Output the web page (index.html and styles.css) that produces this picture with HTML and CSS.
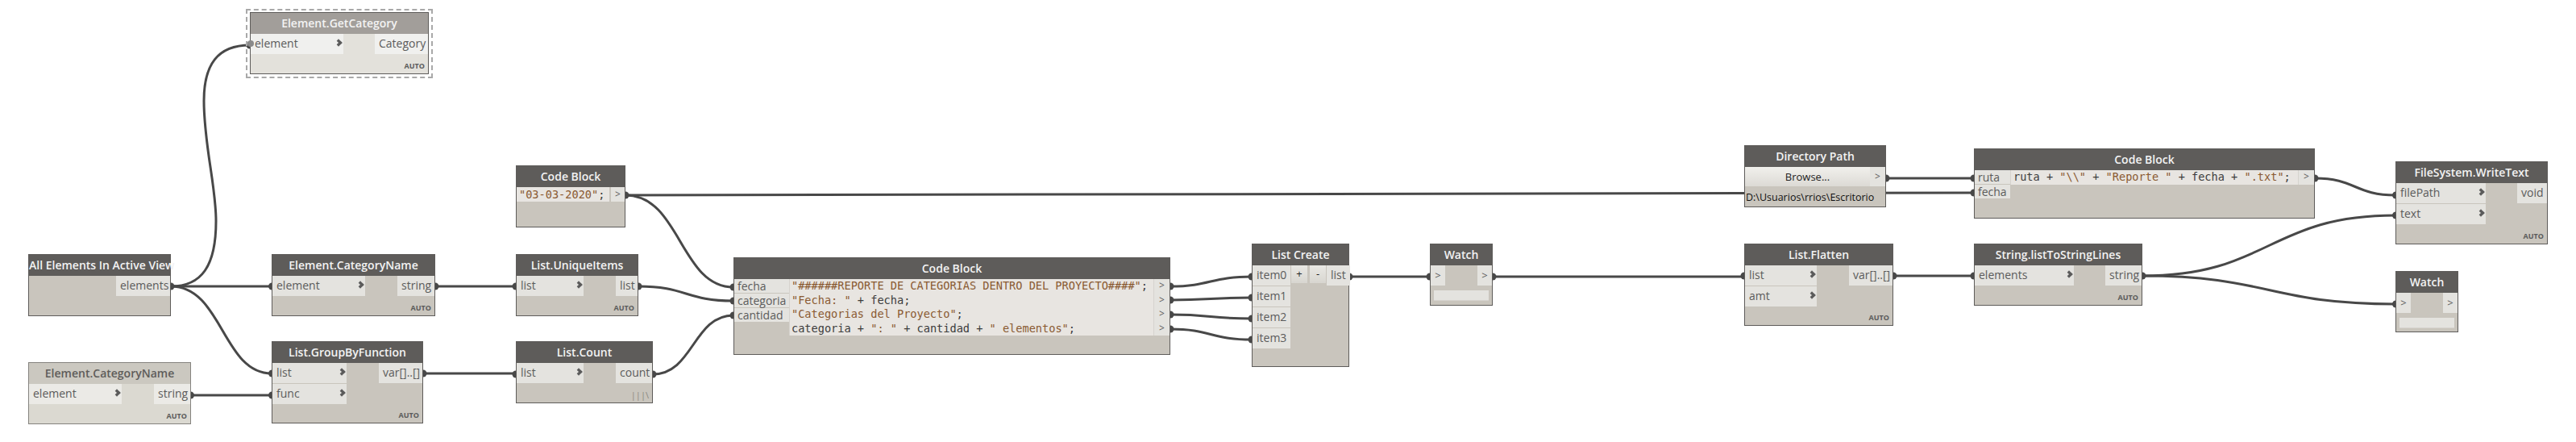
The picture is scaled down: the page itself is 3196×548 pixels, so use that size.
FILE: index.html
```html
<!DOCTYPE html>
<html lang="en">
<head>
    <meta charset="UTF-8">
    <title>Reporte de categorias</title>
    <link rel="stylesheet" href="styles.css">
</head>
<body>
    <div id="canvas">
        <svg class="wires" width="3196" height="548" viewBox="0 0 3196 548">
            <g class="wire">
                <path d="M212 355 C250 355 268 330 268 274 C268 230 253 180 253 125 C253 80 270 56 310 56"/>
                <path d="M212 355 H337"/>
                <path d="M212 355 C276 355 276 463 337 463"/>
                <path d="M236 490 H337"/>
                <path d="M540 355 H640"/>
                <path d="M525 463 H640"/>
                <path d="M776 242 C844 242 844 356 910 356"/>
                <path d="M776 242 L2449 239"/>
                <path d="M792 355 C851 355 851 373 910 373"/>
                <path d="M810 464 C860 464 860 391 910 391"/>
                <path d="M1452 355 C1502 355 1502 343 1553 343"/>
                <path d="M1452 372 C1502 372 1502 369 1553 369"/>
                <path d="M1452 390 C1502 390 1502 395 1553 395"/>
                <path d="M1452 408 C1502 408 1502 421 1553 421"/>
                <path d="M1674 343 H1774"/>
                <path d="M1852 343 H2164"/>
                <path d="M2340 221 H2449"/>
                <path d="M2349 342 H2449"/>
                <path d="M2658 342 C2815 342 2815 267 2972 267"/>
                <path d="M2658 342 C2815 342 2815 377 2972 377"/>
                <path d="M2872 221 C2922 221 2922 242 2972 242"/>
            </g>
            <g class="dots">
                <circle cx="212" cy="355" r="4.5"/><circle cx="337.500" cy="355" r="4.5"/>
                <circle cx="337.500" cy="463" r="4.5"/><circle cx="337.500" cy="490" r="4.5"/>
                <circle cx="236.500" cy="490" r="4.5"/><circle cx="540" cy="355" r="4.5"/>
                <circle cx="525" cy="463" r="4.5"/><circle cx="640" cy="355" r="4.5"/>
                <circle cx="640" cy="464" r="4.5"/><circle cx="776" cy="242" r="4.5"/>
                <circle cx="792" cy="355" r="4.5"/><circle cx="810" cy="464" r="4.5"/>
                <circle cx="910" cy="356" r="4.5"/><circle cx="910" cy="373" r="4.5"/>
                <circle cx="910" cy="391" r="4.5"/><circle cx="1452" cy="355" r="4.5"/>
                <circle cx="1452" cy="372" r="4.5"/><circle cx="1452" cy="390" r="4.5"/>
                <circle cx="1452" cy="408" r="4.5"/><circle cx="1553" cy="343" r="4.5"/>
                <circle cx="1553" cy="369" r="4.5"/><circle cx="1553" cy="395" r="4.5"/>
                <circle cx="1553" cy="421" r="4.5"/><circle cx="1674" cy="343" r="4.5"/>
                <circle cx="1774" cy="343" r="4.5"/><circle cx="1852" cy="343" r="4.5"/>
                <circle cx="2164" cy="342" r="4.5"/><circle cx="2340" cy="221" r="4.5"/>
                <circle cx="2349" cy="342" r="4.5"/><circle cx="2449" cy="221" r="4.5"/>
                <circle cx="2449" cy="239" r="4.5"/><circle cx="2449" cy="342" r="4.5"/>
                <circle cx="2658" cy="342" r="4.5"/><circle cx="2872" cy="221" r="4.5"/>
                <circle cx="2972.500" cy="242" r="4.5"/><circle cx="2972.500" cy="267" r="4.5"/>
                <circle cx="2972.500" cy="377" r="4.5"/><circle cx="310" cy="56" r="4.5"/>
            </g>
        </svg>

        <div class="select-box"></div>

        <div class="node faded get-category">
            <div class="node-title">Element.GetCategory</div>
            <div class="node-ports">
                <div class="port-col in-col"><div class="port chev">element</div></div>
                <div class="port-col"><div class="port out">Category</div></div>
            </div>
            <div class="lacing">AUTO</div>
        </div>

        <div class="node all-elements">
            <div class="node-title">All Elements In Active View</div>
            <div class="node-ports">
                <div class="port-col"></div>
                <div class="port-col"><div class="port out">elements</div></div>
            </div>
        </div>

        <div class="node category-name">
            <div class="node-title">Element.CategoryName</div>
            <div class="node-ports">
                <div class="port-col in-col"><div class="port chev">element</div></div>
                <div class="port-col"><div class="port out">string</div></div>
            </div>
            <div class="lacing">AUTO</div>
        </div>

        <div class="node frozen category-name-2">
            <div class="node-title">Element.CategoryName</div>
            <div class="node-ports">
                <div class="port-col in-col"><div class="port chev">element</div></div>
                <div class="port-col"><div class="port out">string</div></div>
            </div>
            <div class="lacing">AUTO</div>
        </div>

        <div class="node group-by">
            <div class="node-title">List.GroupByFunction</div>
            <div class="node-ports">
                <div class="port-col in-col">
                    <div class="port chev">list</div>
                    <div class="port chev">func</div>
                </div>
                <div class="port-col"><div class="port out">var[]..[]</div></div>
            </div>
            <div class="lacing">AUTO</div>
        </div>

        <div class="node date-block">
            <div class="node-title">Code Block</div>
            <div class="code-body">
                <div class="code-lines">
                    <div class="code-line"><span class="str">"03-03-2020"</span>;</div>
                </div>
                <div class="code-outs"><div class="code-out">&gt;</div></div>
            </div>
        </div>

        <div class="node unique-items">
            <div class="node-title">List.UniqueItems</div>
            <div class="node-ports">
                <div class="port-col in-col"><div class="port chev">list</div></div>
                <div class="port-col"><div class="port out">list</div></div>
            </div>
            <div class="lacing">AUTO</div>
        </div>

        <div class="node list-count">
            <div class="node-title">List.Count</div>
            <div class="node-ports">
                <div class="port-col in-col"><div class="port chev">list</div></div>
                <div class="port-col"><div class="port out">count</div></div>
            </div>
            <div class="lacing thin">|||\</div>
        </div>

        <div class="node report-block">
            <div class="node-title">Code Block</div>
            <div class="code-body">
                <div class="code-ins">
                    <div class="code-in">fecha</div>
                    <div class="code-in">categoria</div>
                    <div class="code-in">cantidad</div>
                </div>
                <div class="code-lines">
                    <div class="code-line"><span class="str">"######REPORTE DE CATEGORIAS DENTRO DEL PROYECTO####"</span>;</div>
                    <div class="code-line"><span class="str">"Fecha: "</span> + fecha;</div>
                    <div class="code-line"><span class="str">"Categorias del Proyecto"</span>;</div>
                    <div class="code-line">categoria + <span class="str">": "</span> + cantidad + <span class="str">" elementos"</span>;</div>
                </div>
                <div class="code-outs">
                    <div class="code-out">&gt;</div>
                    <div class="code-out">&gt;</div>
                    <div class="code-out">&gt;</div>
                    <div class="code-out">&gt;</div>
                </div>
            </div>
        </div>

        <div class="node list-create">
            <div class="node-title">List Create</div>
            <div class="node-ports">
                <div class="port-col in-col">
                    <div class="port">item0</div>
                    <div class="port">item1</div>
                    <div class="port">item2</div>
                    <div class="port">item3</div>
                </div>
                <div class="size-btns">
                    <div class="size-btn">+</div>
                    <div class="size-btn">-</div>
                </div>
                <div class="port-col"><div class="port out">list</div></div>
            </div>
        </div>

        <div class="node watch watch-1">
            <div class="node-title">Watch</div>
            <div class="node-ports">
                <div class="port-col"><div class="port arrow">&gt;</div></div>
                <div class="port-col"><div class="port arrow">&gt;</div></div>
            </div>
            <div class="watch-box"></div>
        </div>

        <div class="node dir-path">
            <div class="node-title">Directory Path</div>
            <div class="browse-row">
                <div class="browse-btn">Browse...</div>
                <div class="browse-out">&gt;</div>
            </div>
            <div class="path-text">D:\Usuarios\rrios\Escritorio</div>
        </div>

        <div class="node list-flatten">
            <div class="node-title">List.Flatten</div>
            <div class="node-ports">
                <div class="port-col in-col">
                    <div class="port chev">list</div>
                    <div class="port chev">amt</div>
                </div>
                <div class="port-col"><div class="port out">var[]..[]</div></div>
            </div>
            <div class="lacing">AUTO</div>
        </div>

        <div class="node path-block">
            <div class="node-title">Code Block</div>
            <div class="code-body">
                <div class="code-ins">
                    <div class="code-in">ruta</div>
                    <div class="code-in">fecha</div>
                </div>
                <div class="code-lines">
                    <div class="code-line">ruta + <span class="str">"\\"</span> + <span class="str">"Reporte "</span> + fecha + <span class="str">".txt"</span>;</div>
                </div>
                <div class="code-outs"><div class="code-out">&gt;</div></div>
            </div>
        </div>

        <div class="node string-lines">
            <div class="node-title">String.listToStringLines</div>
            <div class="node-ports">
                <div class="port-col in-col"><div class="port chev">elements</div></div>
                <div class="port-col"><div class="port out">string</div></div>
            </div>
            <div class="lacing">AUTO</div>
        </div>

        <div class="node write-text">
            <div class="node-title">FileSystem.WriteText</div>
            <div class="node-ports">
                <div class="port-col in-col">
                    <div class="port chev">filePath</div>
                    <div class="port chev">text</div>
                </div>
                <div class="port-col"><div class="port out">void</div></div>
            </div>
            <div class="lacing">AUTO</div>
        </div>

        <div class="node watch watch-2">
            <div class="node-title">Watch</div>
            <div class="node-ports">
                <div class="port-col"><div class="port arrow">&gt;</div></div>
                <div class="port-col"><div class="port arrow">&gt;</div></div>
            </div>
            <div class="watch-box"></div>
        </div>
    </div>
</body>
</html>
```

FILE: styles.css
```css
body {
    margin: 0;
    background: #ffffff;
    font-family: "Open Sans", Arial, sans-serif;
    overflow: hidden;
}

#canvas {
    position: relative;
    width: 3196px;
    height: 548px;
}

.wires {
    position: absolute;
    top: 0;
    left: 0;
}

.wire path {
    fill: none;
    stroke: #484848;
    stroke-width: 3;
}

.dots circle {
    fill: #484848;
}

/* nodes */
.node {
    position: absolute;
    box-sizing: border-box;
    display: flex;
    flex-direction: column;
    background: #c9c5bd;
    border: 1px solid #5e5c5a;
    color: #5b5b5b;
    font-size: 14px;
}

.node-title {
    flex: none;
    height: 26px;
    background: #5e5c5a;
    color: #f3f3f3;
    font-size: 14px;
    font-weight: 600;
    line-height: 25px;
    text-align: center;
    white-space: nowrap;
}

.node-ports {
    display: flex;
    justify-content: space-between;
    align-items: flex-start;
}

.port-col {
    display: flex;
    flex-direction: column;
    gap: 1px;
}

.port {
    position: relative;
    box-sizing: border-box;
    height: 25px;
    padding: 0 5px;
    background: #e4e3df;
    line-height: 24px;
    white-space: nowrap;
}

.port.out {
    text-align: right;
}

.chev::after {
    content: "";
    position: absolute;
    right: 3px;
    top: 8px;
    width: 6px;
    height: 6px;
    border-top: 3px solid #5b5b5b;
    border-right: 3px solid #5b5b5b;
    box-sizing: border-box;
    transform: rotate(45deg) scale(1.1);
}

.port.arrow {
    width: 18px;
    padding: 0;
    text-align: center;
    font-size: 13px;
}

.lacing {
    margin-top: auto;
    padding: 0 4px 2px 0;
    color: #5b5b5b;
    font-size: 9px;
    font-weight: 700;
    line-height: 14px;
    text-align: right;
}

.lacing.thin {
    color: #8a8780;
    font-weight: 400;
    font-size: 11px;
}

/* preview off / frozen look */
.faded {
    background: #e3e1db;
    border-color: #5e5c5a;
}

.faded .node-title {
    background: #a29e9a;
}

.faded .port {
    background: #f0f0ee;
}

.faded .in-col .port::before {
    content: "";
    position: absolute;
    left: -4px;
    top: 8px;
    width: 8px;
    height: 8px;
    border-radius: 50%;
    background: #8a8a8a;
}

.frozen {
    background: #dbd9d1;
    border-color: #85837f;
}

.frozen .node-title {
    background: #cbc8c0;
    color: #5e5c5a;
}

.frozen .port {
    background: #ebeae6;
}

.select-box {
    position: absolute;
    left: 305px;
    top: 11px;
    width: 232px;
    height: 86px;
    box-sizing: border-box;
    border: 2px dashed #a9a9a9;
}

/* code blocks */
.code-body {
    display: flex;
    align-items: flex-start;
}

.code-ins {
    flex: none;
    display: flex;
    flex-direction: column;
    gap: 1px;
}

.code-in {
    box-sizing: border-box;
    height: 17px;
    padding: 0 4px;
    background: #e4e3df;
    line-height: 17px;
    white-space: nowrap;
}

.code-lines {
    flex: 1;
    background: #e8e5e1;
    border-left: 1px solid #d6d3ce;
    padding-left: 3px;
}

.code-line {
    height: 17.500px;
    color: #3c3c3c;
    font-family: "DejaVu Sans Mono", monospace;
    font-size: 13.600px;
    line-height: 17.500px;
    white-space: pre;
}

.str {
    color: #8a5a32;
}

.code-outs {
    flex: none;
    width: 19px;
    border-left: 1px solid #d6d3ce;
    background: #e4e3df;
}

.code-out {
    height: 17.500px;
    font-size: 12px;
    line-height: 16px;
    text-align: center;
}

/* list create */
.size-btns {
    display: flex;
    gap: 3px;
    margin-left: 1px;
    margin-right: 1px;
}

.size-btn {
    width: 20px;
    height: 22px;
    background: linear-gradient(#e9e8e4, #d8d6d0);
    color: #222222;
    font-size: 13px;
    line-height: 20px;
    text-align: center;
}

/* watch */
.watch-box {
    margin: 6px 4px 0;
    height: 12px;
    background: #e4e3df;
    border-bottom: 1px solid #d6d3ce;
}

/* directory path */
.browse-row {
    display: flex;
    height: 25px;
}

.browse-btn {
    flex: 1;
    background: linear-gradient(#f1f0ec, #dcdad5);
    color: #222222;
    font-size: 13px;
    line-height: 24px;
    text-align: center;
}

.browse-out {
    width: 19px;
    background: #e4e3df;
    font-size: 12px;
    line-height: 24px;
    text-align: center;
}

.path-text {
    padding-left: 1px;
    color: #111111;
    font-size: 12.500px;
    line-height: 27px;
    white-space: nowrap;
}

/* node placement on the canvas */
.get-category { left: 310px; top: 15px; width: 222px; height: 77px; }
.get-category .in-col { width: 115px; }
.get-category .port-col:last-child { width: 66px; }

.all-elements { left: 35px; top: 315px; width: 177px; height: 77px; }
.all-elements .port-col:last-child { width: 67px; }

.category-name { left: 337px; top: 315px; width: 203px; height: 77px; }
.category-name .in-col { width: 115px; }
.category-name .port-col:last-child { width: 46px; }

.category-name-2 { left: 35px; top: 449px; width: 202px; height: 77px; }
.category-name-2 .in-col { width: 115px; }
.category-name-2 .port-col:last-child { width: 45px; }

.group-by { left: 337px; top: 423px; width: 188px; height: 102px; }
.group-by .in-col { width: 92px; }
.group-by .port-col:last-child { width: 54px; }

.date-block { left: 640px; top: 205px; width: 136px; height: 77px; }
.date-block .code-lines { border-left: 0; }
.date-block .code-outs { width: 17px; border-left: 2px solid #c9c5bd; }
.date-block .code-line, .date-block .code-out { height: 18px; line-height: 18px; }

.unique-items { left: 640px; top: 315px; width: 152px; height: 77px; }
.unique-items .in-col { width: 83px; }
.unique-items .port-col:last-child { width: 27px; }

.list-count { left: 640px; top: 423px; width: 170px; height: 77px; }
.list-count .in-col { width: 83px; }
.list-count .port-col:last-child { width: 45px; }

.report-block { left: 910px; top: 319px; width: 542px; height: 121px; }
.report-block .code-ins { width: 68px; }
.report-block .code-lines { padding-left: 2px; }

.list-create { left: 1553px; top: 302px; width: 121px; height: 153px; }
.list-create .in-col { width: 47px; }
.list-create .node-ports { justify-content: flex-start; }
.list-create .port-col:last-child { width: 29px; margin-left: 0; }

.watch-1 { left: 1774px; top: 302px; width: 78px; height: 77px; }
.watch-2 { left: 2972px; top: 336px; width: 78px; height: 76px; }

.dir-path { left: 2164px; top: 180px; width: 176px; height: 77px; }

.list-flatten { left: 2164px; top: 302px; width: 185px; height: 102px; }
.list-flatten .in-col { width: 89px; }
.list-flatten .port-col:last-child { width: 54px; }

.path-block { left: 2449px; top: 184px; width: 423px; height: 87px; }
.path-block .code-ins { width: 44px; }

.string-lines { left: 2449px; top: 302px; width: 209px; height: 77px; }
.string-lines .in-col { width: 123px; }
.string-lines .port-col:last-child { width: 45px; }

.write-text { left: 2972px; top: 200px; width: 189px; height: 103px; }
.write-text .in-col { width: 111px; }
.write-text .port-col:last-child { width: 37px; }
```
